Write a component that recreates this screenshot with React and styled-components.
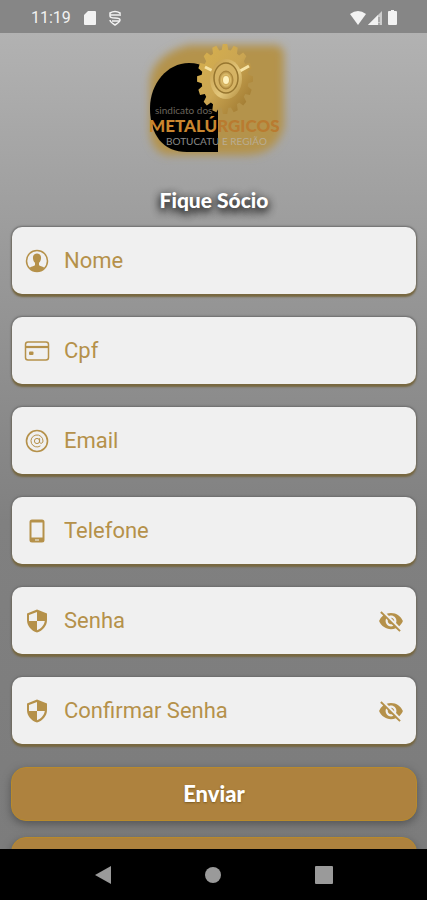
import React, { useState } from "react";
import styled, { createGlobalStyle } from "styled-components";
import { MdVisibilityOff, MdVisibility } from "react-icons/md";

const GOLD = "#b5914a";

const GlobalStyle = createGlobalStyle`
  * { box-sizing: border-box; }
  body { margin: 0; background: #000; font-family: Roboto, sans-serif; }
`;

const Screen = styled.div`
  display: flex;
  flex-direction: column;
  height: 100vh;
`;

const StatusBar = styled.header`
  display: flex;
  align-items: center;
  justify-content: space-between;
  flex: none;
  height: 33px;
  padding: 2px 28px 0 31px;
  background: #868686;
  color: #f2f2f2;
`;

const StatusGroup = styled.div`
  display: flex;
  align-items: center;
  gap: ${(p) => p.$gap}px;
`;

const Clock = styled.span`
  font-size: 16px;
  line-height: 20px;
`;

const Content = styled.main`
  flex: 1;
  min-height: 0;
  overflow-y: auto;
  scrollbar-width: none;
  padding: 3px 11px 24px 12px;
  background: linear-gradient(#b2b2b2 0%, #9a9a9a 27%, #808080 60%, #7c7c7c 100%);
`;

const LogoSvg = styled.svg`
  display: block;
  margin: 0 auto;
`;

const Title = styled.h1`
  width: fit-content;
  margin: 20px auto 13px;
  font: 900 21px/28px Lato, sans-serif;
  color: #fff;
  text-shadow: 0 4px 8px #222, 0 2px 8px #333;
`;

const Form = styled.form`
  display: flex;
  flex-direction: column;
  gap: 23px;
`;

const Field = styled.label`
  display: flex;
  align-items: center;
  height: 67px;
  padding: 0 12px;
  border-radius: 10px;
  background: #f0f0f0;
  box-shadow: 0 3px 2px #786840, 0 0 2px 1px #6c6c6c;
  color: ${GOLD};
`;

const FieldIcon = styled.svg`
  flex: none;
  width: 26px;
  height: 26px;
  margin-right: 14px;
`;

const Input = styled.input`
  flex: 1;
  min-width: 0;
  padding: 0;
  border: 0;
  outline: 0;
  background: none;
  font: 400 22px/28px Roboto, sans-serif;
  color: ${GOLD};
  &::placeholder { color: ${GOLD}; opacity: 1; }
`;

const EyeButton = styled.button`
  display: flex;
  padding: 0;
  border: 0;
  background: none;
  color: ${GOLD};
  font-size: 26px;
`;

const Actions = styled.div`
  display: flex;
  flex-direction: column;
  gap: 16px;
  margin: 0 -1px;
`;

const ActionButton = styled.button`
  height: 54px;
  border: 1px solid #b88a2c;
  border-radius: 15px;
  background: #ae823e;
  box-shadow: 0 3px 8px #555;
  color: #fff;
  font: 900 22px/28px Lato, sans-serif;
  text-shadow: 0 1px 2px #7a5a20;
`;

const NavBar = styled.nav`
  display: flex;
  justify-content: space-around;
  align-items: center;
  flex: none;
  height: 51px;
  padding: 0 48px;
  background: #000;
`;

const NavButton = styled.button`
  display: flex;
  padding: 0;
  border: 0;
  background: none;
  color: #9a9a9a;
`;

const gearPath = (() => {
  const teeth = 16;
  const points = [];
  for (let i = 0; i < teeth; i++) {
    [[-0.36, 0.84], [-0.2, 1], [0.2, 1], [0.36, 0.84]].forEach(([o, r]) => {
      const a = ((i + o) / teeth) * Math.PI * 2 - Math.PI / 2;
      points.push(`${(88 + Math.cos(a) * 28 * r).toFixed(2)},${(43 + Math.sin(a) * 35 * r).toFixed(2)}`);
    });
  }
  return `M${points.join("L")}Z`;
})();

function Logo() {
  return (
    <LogoSvg width="154" height="130" viewBox="0 0 154 130" role="img" aria-label="Sindicato dos Metalúrgicos Botucatu e Região">
      <defs>
        <filter id="glow" x="-20%" y="-20%" width="140%" height="140%">
          <feGaussianBlur stdDeviation="4" />
        </filter>
        <linearGradient id="gear" x1="0" y1="0" x2="1" y2="1">
          <stop offset="0" stopColor="#d8b14d" />
          <stop offset=".5" stopColor="#caa552" />
          <stop offset="1" stopColor="#96702a" />
        </linearGradient>
        <linearGradient id="disc" x1="0" y1="0" x2="1" y2="1">
          <stop offset="0" stopColor="#c39a45" />
          <stop offset=".6" stopColor="#e3c77c" />
          <stop offset="1" stopColor="#b08a3b" />
        </linearGradient>
        <radialGradient id="hub">
          <stop offset="0" stopColor="#fff6cf" />
          <stop offset=".3" stopColor="#c39a44" />
          <stop offset=".65" stopColor="#dcbc6c" />
          <stop offset="1" stopColor="#a98437" />
        </radialGradient>
      </defs>
      <path d="M52 9H137Q147 9 147 20V90Q140 119 108 119H30Q13 115 13 92V43Q18 18 52 9Z" fill="#b4934b" filter="url(#glow)" />
      <path d="M81 116V48Q73 27 52 27C30 27 13 48 13 72C13 99 26 116 50 116Z" fill="#000" />
      <path d={gearPath} fill="url(#gear)" />
      <path d="M68 31l8 4M112 30l-9 5" stroke="#f7e4a5" strokeWidth="3" />
      <ellipse cx="89" cy="43" rx="16" ry="20" fill="url(#disc)" />
      <ellipse cx="89" cy="42" rx="12" ry="15" fill="#d5b364" stroke="#96752f" strokeWidth="1.500" />
      <ellipse cx="89" cy="44" rx="7" ry="9" fill="url(#hub)" stroke="#a8833a" />
      <ellipse cx="89" cy="44" rx="3" ry="4" fill="#fff2bd" />
      <g fontFamily="Lato, sans-serif">
        <text x="18" y="78" fontSize="10" fill="#6b655c">sindicato dos</text>
        <text x="12" y="96" fontSize="17" fontWeight="900" fill="#c9862f">METALÚ<tspan fill="#b97b30">RGICOS</tspan></text>
        <text x="29" y="109" fontSize="10" fill="#8b8b8b">BOTUCATU <tspan fill="#b9ad94">E REGIÃO</tspan></text>
      </g>
    </LogoSvg>
  );
}

const icons = {
  user: (
    <>
      <circle cx="13" cy="13" r="10.5" fill="none" stroke="currentColor" strokeWidth="1.5" />
      <path d="M13 5.5c-3 0-4.3 2.2-4 5 .2 2 .8 3.2 2 4.3v2.4c-1.700 1.300-4 1.200-5.500 2.800C7.500 22.400 10 23.500 13 23.500s5.500-1.100 7.500-3.500c-1.500-1.600-3.800-1.500-5.500-2.800v-2.400c1.200-1.100 1.800-2.300 2-4.300.3-2.800-1-5-4-5Z" fill="currentColor" />
    </>
  ),
  card: (
    <>
      <rect x="1.500" y="4" width="23" height="18" rx="2.500" fill="none" stroke="currentColor" strokeWidth="1.500" />
      <path d="M2 9h22" stroke="currentColor" strokeWidth="2.200" />
      <rect x="5" y="13.500" width="4.500" height="3.500" rx="1" fill="currentColor" />
    </>
  ),
  at: (
    <g fill="none" stroke="currentColor">
      <circle cx="13" cy="13" r="10.500" strokeWidth="1.600" />
      <circle cx="13" cy="13" r="2.600" />
      <path d="M15.600 10.200v3.600c0 2.300 3.400 2 3.400-.8a6 6 0 1 0-2.600 4.900" />
    </g>
  ),
  phone: (
    <path fillRule="evenodd" d="M8 1.500h10a2.500 2.500 0 0 1 2.500 2.500v18a2.500 2.500 0 0 1-2.500 2.500H8A2.500 2.500 0 0 1 5.500 22V4A2.500 2.500 0 0 1 8 1.500ZM7.500 4.500v15h11v-15ZM11 21.500v1h4v-1Z" fill="currentColor" />
  ),
  shield: (
    <path fillRule="evenodd" d="M13 1.500 23 5.500V12c0 6-4.200 10.700-10 12.500C7.200 22.700 3 18 3 12V5.500ZM13 4 5 7v6h8Zm0 9v9.200c4.200-1.700 7.200-5 7.800-9.200Z" fill="currentColor" />
  ),
};

function PasswordToggle({ shown, onToggle }) {
  return (
    <EyeButton type="button" aria-label="Mostrar senha" aria-pressed={shown} onClick={onToggle}>
      {shown ? <MdVisibility /> : <MdVisibilityOff />}
    </EyeButton>
  );
}

function FormField({ icon, label, type = "text" }) {
  const [shown, setShown] = useState(false);
  const secret = type === "password";
  return (
    <Field>
      <FieldIcon viewBox="0 0 26 26" aria-hidden="true">{icons[icon]}</FieldIcon>
      <Input type={shown ? "text" : type} placeholder={label} aria-label={label} />
      {secret && <PasswordToggle shown={shown} onToggle={() => setShown(!shown)} />}
    </Field>
  );
}

export default function App() {
  return (
    <>
      <GlobalStyle />
      <Screen>
        <StatusBar>
          <StatusGroup $gap={12}>
            <Clock>11:19</Clock>
            <svg width="14" height="14" viewBox="0 0 14 14"><path d="M5 0h7q1 0 1 1v12q0 1-1 1H2q-1 0-1-1V4Z" fill="currentColor" /></svg>
            <svg width="12" height="16" viewBox="0 0 12 16" fill="none" stroke="currentColor" strokeWidth="1.500"><path d="M11 6V3Q6 0 1 3v3q0 2 5 2t5 2q0 2-5 5-5-3-5-5M1 5h9M3 11h8" /></svg>
          </StatusGroup>
          <StatusGroup $gap={2}>
            <svg width="16" height="14" viewBox="0 0 16 14"><path d="M0 3Q8-3 16 3L8 14Z" fill="currentColor" /></svg>
            <svg width="15" height="14" viewBox="0 0 15 14"><path d="M0 14 14 0v14Z" fill="currentColor" opacity=".65" /><path d="M0 14 10 4v10Z" fill="currentColor" /><path d="M11 6v5M11 12v2" stroke="#868686" strokeWidth="1" /></svg>
            <svg width="14" height="16" viewBox="0 0 14 16"><path d="M6 0h3v1h2q1 0 1 1v12q0 1-1 1H4q-1 0-1-1V2q0-1 1-1h2Z" fill="currentColor" /></svg>
          </StatusGroup>
        </StatusBar>
        <Content>
          <Logo />
          <Title>Fique Sócio</Title>
          <Form onSubmit={(e) => e.preventDefault()}>
            <FormField icon="user" label="Nome" />
            <FormField icon="card" label="Cpf" />
            <FormField icon="at" label="Email" type="email" />
            <FormField icon="phone" label="Telefone" type="tel" />
            <FormField icon="shield" label="Senha" type="password" />
            <FormField icon="shield" label="Confirmar Senha" type="password" />
            <Actions>
              <ActionButton type="submit">Enviar</ActionButton>
              <ActionButton type="button" aria-label="Voltar" />
            </Actions>
          </Form>
        </Content>
        <NavBar>
          <NavButton aria-label="Voltar">
            <svg width="18" height="18" viewBox="0 0 18 18"><path d="M1 9 17 0v18Z" fill="currentColor" /></svg>
          </NavButton>
          <NavButton aria-label="Início">
            <svg width="18" height="18" viewBox="0 0 18 18"><circle cx="9" cy="9" r="8" fill="currentColor" /></svg>
          </NavButton>
          <NavButton aria-label="Recentes">
            <svg width="18" height="18" viewBox="0 0 18 18"><rect width="18" height="18" rx="1" fill="currentColor" /></svg>
          </NavButton>
        </NavBar>
      </Screen>
    </>
  );
}
